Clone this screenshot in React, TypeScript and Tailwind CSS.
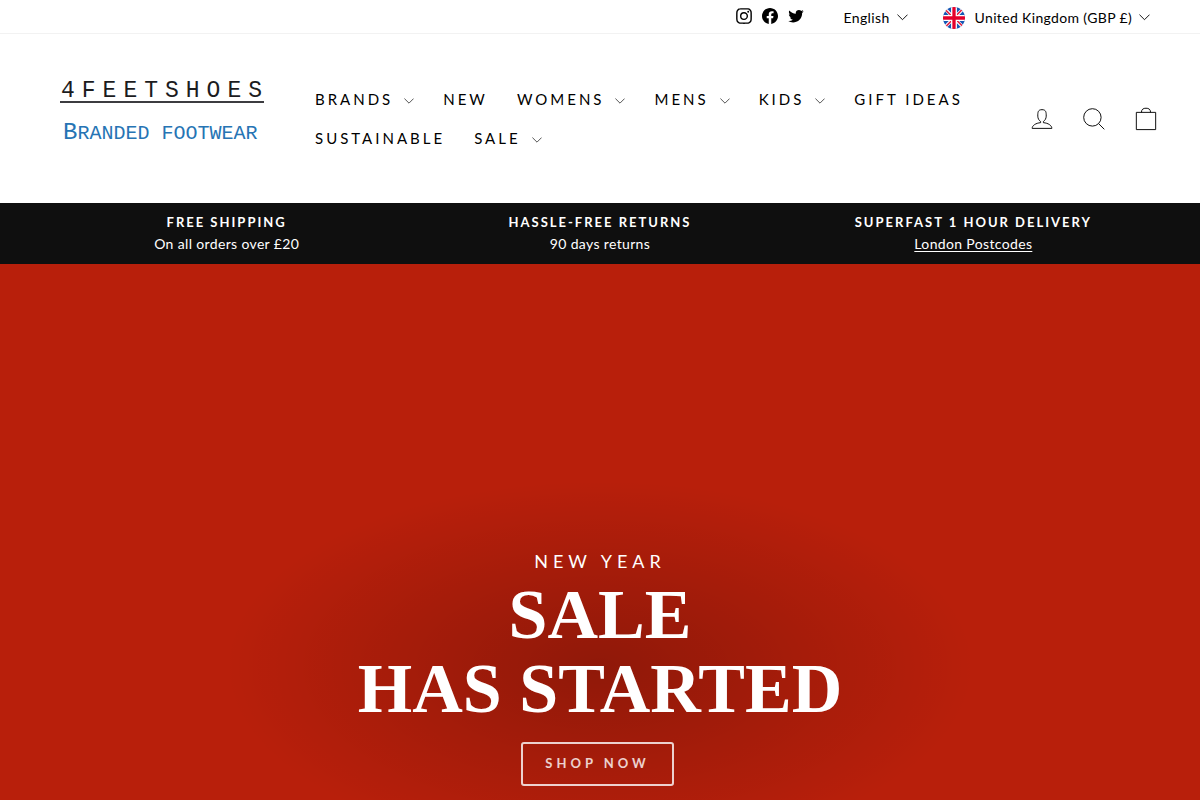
import { ReactNode } from 'react';

type NavItem = {
  label: string;
  menu?: boolean;
};

type Announcement = {
  title: string;
  text: string;
  href?: string;
};

const navItems: NavItem[] = [
  { label: 'BRANDS', menu: true },
  { label: 'NEW' },
  { label: 'WOMENS', menu: true },
  { label: 'MENS', menu: true },
  { label: 'KIDS', menu: true },
  { label: 'GIFT IDEAS' },
  { label: 'SUSTAINABLE' },
  { label: 'SALE', menu: true },
];

const announcements: Announcement[] = [
  { title: 'FREE SHIPPING', text: 'On all orders over £20' },
  { title: 'HASSLE-FREE RETURNS', text: '90 days returns' },
  {
    title: 'SUPERFAST 1 HOUR DELIVERY',
    text: 'London Postcodes',
    href: '#london',
  },
];

const Chevron = ({ className }: { className: string }) => (
  <svg
    viewBox="0 0 12 7"
    className={className}
    fill="none"
    stroke="currentColor"
    aria-hidden="true"
  >
    <path d="M.5 .7 6 6.2 11.5 .7" />
  </svg>
);

const InstagramIcon = () => (
  <svg viewBox="0 0 32 32" className="size-4" fill="currentColor">
    <path d="M16 3.094c4.206 0 4.7.019 6.363.094 1.538.069 2.369.325 2.925.544.738.287 1.262.625 1.813 1.175s.894 1.075 1.175 1.813c.212.556.475 1.387.544 2.925.075 1.662.094 2.156.094 6.363s-.019 4.7-.094 6.363c-.069 1.538-.325 2.369-.544 2.925-.288.738-.625 1.262-1.175 1.813s-1.075.894-1.813 1.175c-.556.212-1.387.475-2.925.544-1.663.075-2.156.094-6.363.094s-4.7-.019-6.363-.094c-1.537-.069-2.369-.325-2.925-.544-.737-.288-1.263-.625-1.813-1.175s-.894-1.075-1.175-1.813c-.212-.556-.475-1.387-.544-2.925-.075-1.663-.094-2.156-.094-6.363s.019-4.7.094-6.363c.069-1.537.325-2.369.544-2.925.287-.737.625-1.263 1.175-1.813s1.075-.894 1.813-1.175c.556-.212 1.388-.475 2.925-.544 1.662-.081 2.156-.094 6.363-.094zm0-2.838c-4.275 0-4.813.019-6.494.094-1.675.075-2.819.344-3.819.731-1.037.4-1.913.944-2.788 1.819S1.486 4.656 1.08 5.688c-.387 1-.656 2.144-.731 3.825-.075 1.675-.094 2.213-.094 6.488s.019 4.813.094 6.494c.075 1.675.344 2.819.731 3.825.4 1.038.944 1.913 1.819 2.788s1.756 1.413 2.788 1.819c1 .387 2.144.656 3.825.731s2.213.094 6.494.094 4.813-.019 6.494-.094c1.675-.075 2.819-.344 3.825-.731 1.038-.4 1.913-.944 2.788-1.819s1.413-1.756 1.819-2.788c.387-1 .656-2.144.731-3.825s.094-2.212.094-6.494-.019-4.813-.094-6.494c-.075-1.675-.344-2.819-.731-3.825-.4-1.038-.944-1.913-1.819-2.788s-1.756-1.413-2.788-1.819c-1-.387-2.144-.656-3.825-.731C20.812.275 20.275.256 16 .256zm0 7.663a8.088 8.088 0 0 0 0 16.175c4.463 0 8.087-3.625 8.087-8.088S20.462 7.919 16 7.919zm0 13.337a5.25 5.25 0 1 1 0-10.5 5.25 5.25 0 1 1 0 10.5zM26.294 7.594a1.887 1.887 0 1 1-3.774.002 1.887 1.887 0 0 1 3.774-.002z" />
  </svg>
);

const FacebookIcon = () => (
  <svg viewBox="0 0 24 24" className="size-4" fill="currentColor">
    <path d="M24 12.073c0-6.627-5.373-12-12-12s-12 5.373-12 12c0 5.99 4.388 10.954 10.125 11.854v-8.385H7.078v-3.47h3.047V9.43c0-3.007 1.792-4.669 4.533-4.669 1.312 0 2.686.235 2.686.235v2.953H15.83c-1.491 0-1.956.925-1.956 1.874v2.25h3.328l-.532 3.47h-2.796v8.385C19.612 23.027 24 18.062 24 12.073z" />
  </svg>
);

const TwitterIcon = () => (
  <svg viewBox="0 0 32 32" className="size-4" fill="currentColor">
    <path d="M31.281 6.733q-1.304 1.924-3.13 3.26 0 .13.033.408t.033.408q0 2.543-.75 5.086t-2.282 4.858-3.635 4.108-5.053 2.869-6.341 1.076q-5.282 0-9.65-2.836.913.065 1.5.065 4.401 0 7.857-2.673-2.054-.033-3.668-1.255t-2.266-3.146q.554.13 1.206.13.88 0 1.663-.261-2.184-.456-3.619-2.184t-1.435-3.977v-.065q1.239.652 2.836.717-1.271-.848-2.021-2.233t-.75-2.983q0-1.63.815-3.195 2.38 2.967 5.754 4.678t7.319 1.907q-.228-.815-.228-1.434 0-2.608 1.858-4.45t4.532-1.842q1.304 0 2.51.522t2.054 1.467q2.152-.424 4.01-1.532-.685 2.217-2.771 3.488 1.989-.261 3.619-.978z" />
  </svg>
);

const UnitedKingdomFlag = () => (
  <svg viewBox="0 0 60 60" className="size-[22px] rounded-full" aria-hidden="true">
    <path fill="#1557b5" d="M0 0h60v60H0z" />
    <path stroke="#fff" strokeWidth="9" d="M0 0 60 60M60 0 0 60" />
    <path stroke="#e31b3d" strokeWidth="4" d="M0 1 25 26M59 0 34 25M60 59 35 34M1 60 26 35" />
    <path stroke="#fff" strokeWidth="16" d="M30 0v60M0 30h60" />
    <path stroke="#e4002b" strokeWidth="9" d="M30 0v60M0 30h60" />
  </svg>
);

const ToolIcon = ({ label, children }: { label: string; children: ReactNode }) => (
  <a href="#" aria-label={label}>
    <svg
      viewBox="0 0 64 64"
      className="size-[30px]"
      fill="none"
      stroke="currentColor"
      strokeWidth="2"
    >
      {children}
    </svg>
  </a>
);

const TopBar = () => (
  <div className="flex h-[34px] items-center justify-end border-b border-[#f2f2f2] pt-[2px] pr-[50px] text-sm tracking-wide">
    <div className="flex gap-[10px] pb-1">
      <a href="#instagram" aria-label="Instagram">
        <InstagramIcon />
      </a>
      <a href="#facebook" aria-label="Facebook">
        <FacebookIcon />
      </a>
      <a href="#twitter" aria-label="Twitter">
        <TwitterIcon />
      </a>
    </div>
    <div className="ml-10 flex items-center gap-[7px]">
      <select
        aria-label="Language"
        className="field-sizing-content appearance-none bg-transparent"
      >
        <option>English</option>
      </select>
      <Chevron className="w-[11px]" />
    </div>
    <div className="ml-[35px] flex items-center gap-[7px]">
      <UnitedKingdomFlag />
      <select
        aria-label="Country"
        className="ml-[3px] field-sizing-content appearance-none bg-transparent"
      >
        <option>United Kingdom (GBP £)</option>
      </select>
      <Chevron className="w-[11px]" />
    </div>
  </div>
);

const Logo = () => (
  <a
    href="#"
    className="flex w-[204px] shrink-0 flex-col pb-2 font-['Liberation_Mono',monospace] whitespace-nowrap"
  >
    <span className="border-b-2 border-[#3c3c40] pl-px text-[23px] leading-5 tracking-[7px] text-[#1c1c1e]">
      4FEETSHOES
    </span>
    <span className="mt-4 pl-[3px] text-xl leading-7 text-[#2674b4]">
      <span className="text-2xl leading-7">B</span>RANDED FOOTWEAR
    </span>
  </a>
);

const Header = () => (
  <header className="flex min-h-[169px] items-center pr-[39px] pl-[60px]">
    <Logo />
    <nav className="ml-[51px] flex flex-1 flex-wrap gap-x-[29px] text-[15px] leading-[39px] tracking-[3px]">
      {navItems.map((item) => (
        <a
          key={item.label}
          href="#"
          className="flex items-center gap-[11px]"
          aria-haspopup={item.menu}
        >
          {item.label}
          {item.menu && <Chevron className="mt-1 w-[10px] text-[#333]" />}
        </a>
      ))}
    </nav>
    <div className="ml-10 flex gap-[22px] text-black">
      <ToolIcon label="Log in">
        <path d="M35 39.84v-2.53c3.3-1.91 6-6.66 6-11.41 0-7.63 0-13.82-9-13.82s-9 6.19-9 13.82c0 4.75 2.7 9.51 6 11.41v2.53c-10.18.85-18 6-18 12.16h42c0-6.19-7.82-11.31-18-12.16z" />
      </ToolIcon>
      <ToolIcon label="Search">
        <path d="M47.16 28.58A18.58 18.58 0 1 1 28.58 10a18.58 18.58 0 0 1 18.58 18.58zM54 54 41.94 42" />
      </ToolIcon>
      <ToolIcon label="Cart">
        <path d="M11.375 17.863h41.25v36.75h-41.25zM22.25 18c0-7.105 4.35-9 9.75-9s9.75 1.895 9.75 9" />
      </ToolIcon>
    </div>
  </header>
);

const AnnouncementBar = () => (
  <div className="grid grid-cols-3 bg-[#0f0f0f] px-10 pt-2 pb-[9px] text-center text-white">
    {announcements.map((item) => (
      <div key={item.title}>
        <p className="text-[13px] leading-[22px] font-bold tracking-[2px]">
          {item.title}
        </p>
        <p className="text-sm leading-[22px] tracking-wide">
          {item.href ? (
            <a href={item.href} className="underline underline-offset-2">
              {item.text}
            </a>
          ) : (
            item.text
          )}
        </p>
      </div>
    ))}
  </div>
);

const Hero = () => (
  <section className="flex flex-1 items-end justify-center overflow-hidden bg-[#b81f0b] pb-[14px] text-center text-white">
    <div className="relative">
      {/* soft shade behind the copy */}
      <div className="absolute -inset-x-[200px] -inset-y-[100px] bg-[radial-gradient(rgba(0,0,0,0.22)_0%,transparent_60%)]" />
      <div className="relative flex flex-col items-center">
        <p className="text-lg leading-7 tracking-[5px]">NEW YEAR</p>
        <h1 className="mt-[3px] font-['Liberation_Serif',serif] text-[70px] leading-[74px] font-bold">
          SALE
          <br />
          HAS STARTED
        </h1>
        <button
          type="button"
          className="mt-4 mr-[5px] h-11 rounded-[3px] border-2 border-white px-[22px] text-[13px] font-bold tracking-[4px] opacity-80"
        >
          SHOP NOW
        </button>
      </div>
    </div>
  </section>
);

export default function App() {
  return (
    <div className="flex min-h-screen flex-col bg-white font-['Lato',sans-serif] text-black">
      <TopBar />
      <Header />
      <AnnouncementBar />
      <Hero />
    </div>
  );
}
